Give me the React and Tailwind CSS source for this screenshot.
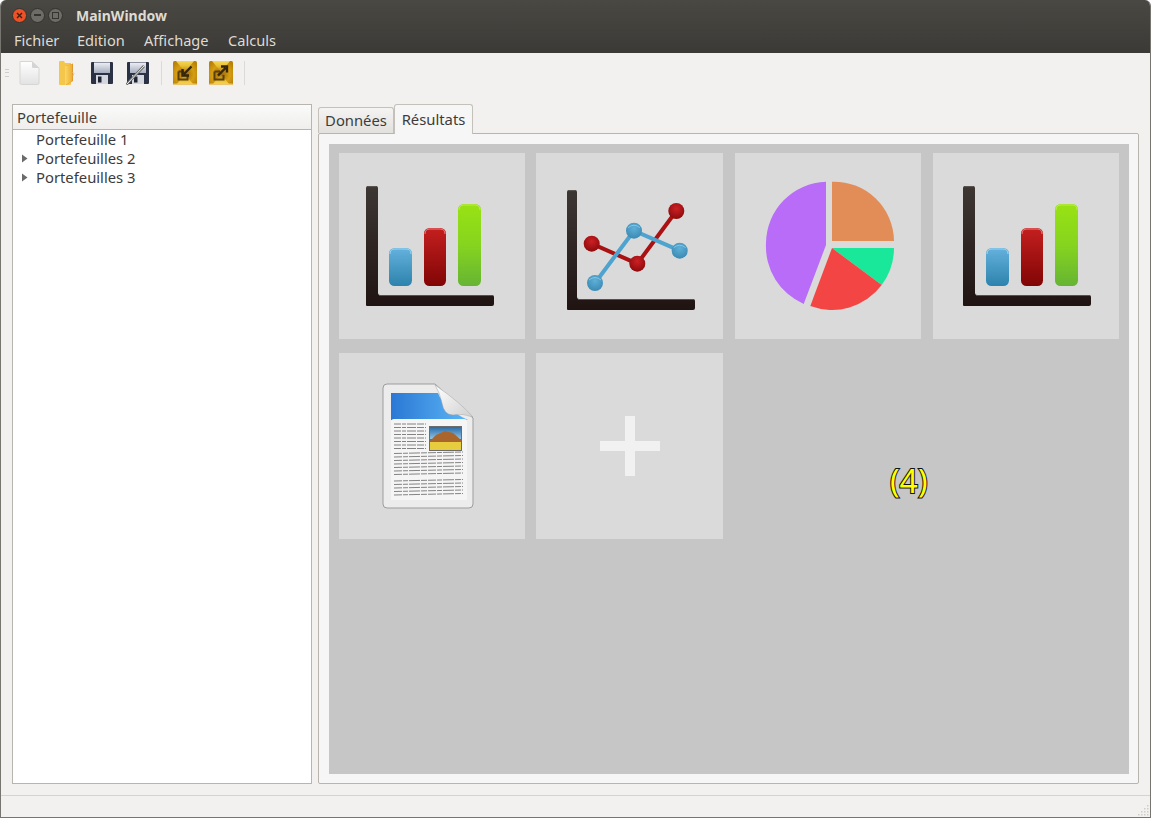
import { useId } from 'react'

const menus = [
  { label: 'Fichier', width: 'w-[63px]' },
  { label: 'Edition', width: 'w-[67px]' },
  { label: 'Affichage', width: 'w-[84px]' },
  { label: 'Calculs', width: 'w-[60px]' },
]

const tree = [
  { label: 'Portefeuille 1', arrow: false },
  { label: 'Portefeuilles 2', arrow: true },
  { label: 'Portefeuilles 3', arrow: true },
]

function WindowButton({ className, children }) {
  return (
    <div className={`w-[15px] h-[15px] rounded-full flex items-center justify-center border border-[#33322e] ${className}`}>
      {children}
    </div>
  )
}

function AxisShape({ x, y, h, w, t, id }) {
  // L shaped axis shared by the two chart icons
  return (
    <>
      <path
        d={`M${x + 2} ${y} H${x + t - 2} Q${x + t} ${y} ${x + t} ${y + 2} V${y + h - 13} Q${x + t} ${y + h - 11} ${x + t + 2} ${y + h - 11} H${x + w - 2} Q${x + w} ${y + h - 11} ${x + w} ${y + h - 9} V${y + h - 2} Q${x + w} ${y + h} ${x + w - 2} ${y + h} H${x + 1} Q${x} ${y + h} ${x} ${y + h - 1} V${y + 2} Q${x} ${y} ${x + 2} ${y} Z`}
        fill={`url(#${id})`}
      />
      <path d={`M${x + 2} ${y + 0.6} H${x + t - 2}`} stroke="#5f5854" strokeWidth="1" fill="none" />
      <path d={`M${x + t + 1} ${y + h - 10.5} H${x + w - 1}`} stroke="#5c4f4a" strokeWidth="1" fill="none" />
    </>
  )
}

function BarChartIcon({ dx = 0 }) {
  const id = useId().replace(/:/g, '')
  const bars = [
    { x: 50, y: 95, w: 23, h: 38, grad: 'b', top: '#9ad6f2' },
    { x: 85, y: 75, w: 22, h: 58, grad: 'r', top: '#ea8080' },
    { x: 119, y: 51, w: 23, h: 82, grad: 'g', top: '#c0ea58' },
  ]
  return (
    <svg viewBox="0 0 186 186" className="w-full h-full">
      <defs>
        <linearGradient id={`${id}a`} x1="0" y1="0" x2="0" y2="1">
          <stop offset="0" stopColor="#3d3733" />
          <stop offset="1" stopColor="#201412" />
        </linearGradient>
        <linearGradient id={`${id}b`} x1="0" y1="0" x2="0" y2="1">
          <stop offset="0" stopColor="#64b1dc" />
          <stop offset="1" stopColor="#2c83ad" />
        </linearGradient>
        <linearGradient id={`${id}r`} x1="0" y1="0" x2="0" y2="1">
          <stop offset="0" stopColor="#c41f1f" />
          <stop offset="1" stopColor="#810505" />
        </linearGradient>
        <linearGradient id={`${id}g`} x1="0" y1="0" x2="0" y2="1">
          <stop offset="0" stopColor="#98e213" />
          <stop offset="0.5" stopColor="#86d41f" />
          <stop offset="1" stopColor="#66b433" />
        </linearGradient>
      </defs>
      <g transform={`translate(${dx} 0)`}>
        <AxisShape x={27} y={33} h={120} w={128} t={12} id={`${id}a`} />
        {bars.map((b) => (
          <g key={b.grad}>
            <rect x={b.x} y={b.y} width={b.w} height={b.h} rx="5.5" fill={`url(#${id}${b.grad})`} />
            <path d={`M${b.x + 1} ${b.y + 6} Q${b.x + 1} ${b.y + 1} ${b.x + 6} ${b.y + 1} H${b.x + b.w - 6} Q${b.x + b.w - 1} ${b.y + 1} ${b.x + b.w - 1} ${b.y + 6}`} stroke={b.top} strokeWidth="1" fill="none" />
          </g>
        ))}
      </g>
    </svg>
  )
}

function LineChartIcon() {
  const id = useId().replace(/:/g, '')
  const red = [[55.7, 90.7], [101.3, 110.7], [140.3, 58]]
  const blue = [[59, 130], [98, 77.7], [143.7, 97.7]]
  const line = (pts) => pts.map((p) => p.join(',')).join(' ')
  return (
    <svg viewBox="0 0 187 186" className="w-full h-full">
      <defs>
        <linearGradient id={`${id}a`} x1="0" y1="0" x2="0" y2="1">
          <stop offset="0" stopColor="#3d3733" />
          <stop offset="1" stopColor="#201412" />
        </linearGradient>
        <radialGradient id={`${id}r`} cx="0.5" cy="0.35" r="0.65">
          <stop offset="0" stopColor="#cc2024" />
          <stop offset="1" stopColor="#8d0a0c" />
        </radialGradient>
        <radialGradient id={`${id}b`} cx="0.5" cy="0.35" r="0.65">
          <stop offset="0" stopColor="#5fb0d8" />
          <stop offset="1" stopColor="#3a8ab4" />
        </radialGradient>
      </defs>
      <AxisShape x={31} y={37} h={120} w={128} t={10} id={`${id}a`} />
      <polyline points={line(red)} fill="none" stroke="#aa1113" strokeWidth="4" />
      <polyline points={line(blue)} fill="none" stroke="#4fa3cf" strokeWidth="4" />
      {red.map(([cx, cy]) => (
        <circle key={cx} cx={cx} cy={cy} r="8" fill={`url(#${id}r)`} />
      ))}
      {blue.map(([cx, cy]) => (
        <g key={cx}>
          <circle cx={cx} cy={cy} r="8" fill={`url(#${id}b)`} />
          <path d={`M${cx - 6} ${cy - 3} Q${cx} ${cy - 8} ${cx + 6} ${cy - 3}`} stroke="#8fcfee" strokeWidth="0.8" fill="none" />
        </g>
      ))}
    </svg>
  )
}

function PieIcon() {
  return (
    <svg viewBox="0 0 186 186" className="w-full h-full">
      <path d="M97 28.7 A60 60 0 0 1 159 88 H97 Z" fill="#e28d57" />
      <path d="M97 95 H159 A62 62 0 0 1 146.7 132 Z" fill="#19e89a" />
      <path d="M97 95 L146.7 132 A62 62 0 0 1 75.3 153 Z" fill="#f44545" />
      <path d="M91 28.7 A62 62 0 0 0 31 90 A63 63 0 0 0 68.7 151 L91 92 Z" fill="#b86cf7" />
    </svg>
  )
}

function DocIcon() {
  const id = useId().replace(/:/g, '')
  const shortLines = [71, 74.5, 78, 81.5, 85, 88.5, 92, 95.5]
  const longLines = [99.5, 103, 106.5, 110, 113.5, 117, 120.5, 127, 130.5, 134, 137.5, 141]
  return (
    <svg viewBox="0 0 186 186" className="w-full h-full">
      <defs>
        <linearGradient id={`${id}b`} x1="0" y1="0" x2="1" y2="0">
          <stop offset="0" stopColor="#2a78d4" />
          <stop offset="1" stopColor="#5cb6f6" />
        </linearGradient>
        <linearGradient id={`${id}f`} x1="0" y1="0" x2="1" y2="1">
          <stop offset="0" stopColor="#ffffff" />
          <stop offset="1" stopColor="#cfcfcf" />
        </linearGradient>
        <linearGradient id={`${id}s`} x1="0" y1="0" x2="0" y2="1">
          <stop offset="0" stopColor="#2a6aa6" />
          <stop offset="1" stopColor="#8fc4e6" />
        </linearGradient>
      </defs>
      <path d="M48 31 H96 L134 65 V151 Q134 155 130 155 H48 Q44 155 44 151 V35 Q44 31 48 31 Z" fill="#ececec" stroke="#9d9d9d" strokeWidth="1" />
      <path d="M52 40 H99 Q105 56 129 67 H52 Z" fill={`url(#${id}b)`} />
      <path d="M96 32 Q122 50 134 64 Q124 60 114 62 Q105 62 103 50 Q101 40 96 32 Z" fill={`url(#${id}f)`} stroke="#a5a5a5" strokeWidth="0.5" />
      <path d="M55 66 H125 Q128 66 128 69 V147 H52 V69 Q52 66 55 66 Z" fill="#f5f5f5" />
      {shortLines.map((y) => (
        <line key={y} x1="55" y1={y} x2="87" y2={y} stroke="#666" strokeWidth="0.8" strokeDasharray="7 1 4 1 9 1" />
      ))}
      {longLines.map((y) => (
        <line key={y} x1="55" y1={y + 1} x2="124" y2={y - 0.5} stroke="#666" strokeWidth="0.8" strokeDasharray="8 1 5 1 11 1 6 1" />
      ))}
      <rect x="90" y="73" width="33" height="25" fill="#6b6b6b" />
      <rect x="91" y="74" width="31" height="12" fill={`url(#${id}s)`} />
      <path d="M91 88 L97 82 L106 78 L114 80 L122 87 V90 H91 Z" fill="#a9652c" />
      <rect x="91" y="89" width="31" height="8" fill="#e6cc3e" />
    </svg>
  )
}

function PlusIcon() {
  return (
    <svg viewBox="0 0 187 186" className="w-full h-full">
      <path d="M89 63 H99 V88 H124 V98 H99 V123 H89 V98 H64 V88 H89 Z" fill="#f1f1f1" />
    </svg>
  )
}

function NewIcon() {
  return (
    <svg width="24" height="26" viewBox="0 0 24 26">
      <defs>
        <linearGradient id="newg" x1="0" y1="0" x2="0" y2="1">
          <stop offset="0" stopColor="#ffffff" />
          <stop offset="1" stopColor="#e2e2e2" />
        </linearGradient>
      </defs>
      <path d="M3 1.5 H15 L22 8 V23 Q22 24.5 20.5 24.5 H4.5 Q3 24.5 3 23 Z" fill="url(#newg)" stroke="#d6d6d4" strokeWidth="1" />
      <path d="M15 1.5 V7 Q15 8 16 8 H22 Z" fill="#d4d4d4" />
    </svg>
  )
}

function FolderIcon() {
  return (
    <svg width="18" height="26" viewBox="0 0 18 26">
      <defs>
        <linearGradient id="foldg" x1="0" y1="0" x2="1" y2="0">
          <stop offset="0" stopColor="#fbd765" />
          <stop offset="1" stopColor="#eeae34" />
        </linearGradient>
      </defs>
      <path d="M1 2 Q1 1 2 1 H6 L7 3 H13 V24 Q13 25 12 25 H2 Q1 25 1 24 Z" fill="#f4c64c" />
      <path d="M8 6 L15 3.5 V21 L8 25 Z" fill="#e0992a" />
      <path d="M7 6.5 L14 4 V21.5 L7 25 Z" fill="url(#foldg)" />
      <path d="M14.5 12 Q17 13 15 16" fill="none" stroke="#d9c89a" strokeWidth="1" />
    </svg>
  )
}

function SaveIcon({ slashed }) {
  return (
    <svg width="24" height="24" viewBox="0 0 24 24">
      <defs>
        <linearGradient id="saveg" x1="0" y1="0" x2="0" y2="1">
          <stop offset="0" stopColor="#eef0f6" />
          <stop offset="1" stopColor="#a5acbd" />
        </linearGradient>
      </defs>
      <path d="M1 2 Q1 1 2 1 H22 Q23 1 23 2 V22 Q23 23 22 23 H2 Q1 23 1 22 Z" fill="#2a3244" />
      <rect x="4" y="1.5" width="16" height="10.5" fill="url(#saveg)" />
      <rect x="6" y="14" width="12" height="9" fill="#d5d7de" />
      <rect x="8" y="15.5" width="3.5" height="6" fill="#1c2333" />
      {slashed && (
        <>
          <path d="M0.5 23.5 L18 5" stroke="#6b6b6b" strokeWidth="2.6" />
          <path d="M1 23 L18 5" stroke="#ececec" strokeWidth="1" />
        </>
      )}
    </svg>
  )
}

function GoldIcon({ out }) {
  const id = useId().replace(/:/g, '')
  return (
    <svg width="24" height="24" viewBox="0 0 24 24">
      <defs>
        <radialGradient id={id} cx="0.5" cy="0.55" r="0.62">
          <stop offset="0" stopColor="#9a6606" />
          <stop offset="0.6" stopColor="#d69e12" />
          <stop offset="1" stopColor="#b98108" />
        </radialGradient>
        <linearGradient id={`${id}t`} x1="0" y1="0" x2="0" y2="1">
          <stop offset="0" stopColor="#fbe05a" stopOpacity="0.95" />
          <stop offset="1" stopColor="#fbe05a" stopOpacity="0" />
        </linearGradient>
        <linearGradient id={`${id}u`} x1="0" y1="1" x2="0" y2="0">
          <stop offset="0" stopColor="#f8d84c" stopOpacity="0.95" />
          <stop offset="1" stopColor="#f8d84c" stopOpacity="0" />
        </linearGradient>
      </defs>
      <rect x="0" y="0" width="24" height="24" rx="1.5" fill={`url(#${id})`} />
      <path d="M3 0 H21 L12 11 Z" fill={`url(#${id}t)`} />
      <path d="M4 23 H20 L12 13 Z" fill={`url(#${id}u)`} />
      <rect x="0" y="22.5" width="24" height="1.5" rx="0.7" fill="#edc56e" />
      <path d="M5.5 10.5 H11 M5.5 10.5 V18.5 H14.5 V14" fill="none" stroke="#5b3f0a" strokeWidth="2" />
      {out ? (
        <path d="M9 14.5 L16.5 7 M12 5.5 H18 V11.5" fill="none" stroke="#35260a" strokeWidth="2.4" />
      ) : (
        <path d="M18.5 5.5 L11 13 M9.5 8 V14.5 H16" fill="none" stroke="#35260a" strokeWidth="2.4" />
      )}
    </svg>
  )
}

function ToolSeparator() {
  return <div className="w-px h-[24px] bg-[#dcdad6]" />
}

function ResizeGrip() {
  const dots = [[9, 1], [9, 4], [6, 4], [9, 7], [6, 7], [3, 7], [9, 10], [6, 10], [3, 10], [0, 10]]
  return (
    <svg width="11" height="12" viewBox="0 0 11 12">
      {dots.map(([x, y]) => (
        <rect key={`${x}-${y}`} x={x} y={y} width="1.5" height="1.5" fill="#d0cdc8" />
      ))}
    </svg>
  )
}

function Tile({ wide, children }) {
  return <div className={`bg-[#dadada] h-[186px] ${wide ? 'w-[187px]' : 'w-[186px]'}`}>{children}</div>
}

export default function App() {
  return (
    <div className="w-[1151px] h-[818px] bg-white overflow-hidden font-['Noto_Sans',sans-serif]">
      <div className="h-full flex flex-col rounded-t-[6px] overflow-hidden border-x border-b border-[#77756f] bg-[#f2f1f0]">
        {/* Title and menu bar */}
        <div className="bg-gradient-to-b from-[#4a4843] to-[#3b3a36] shrink-0">
          <div className="h-[27px] flex items-center pl-[11px] pt-[3px]">
            <div className="flex items-center gap-[3px]">
              <WindowButton className="bg-[#e9532a]">
                <svg width="7" height="7" viewBox="0 0 7 7">
                  <path d="M1 1 L6 6 M6 1 L1 6" stroke="#4a1c0c" strokeWidth="1.4" />
                </svg>
              </WindowButton>
              <WindowButton className="bg-[#6d6c67]">
                <div className="w-[7px] h-[2px] bg-[#35342f]" />
              </WindowButton>
              <WindowButton className="bg-[#6d6c67]">
                <div className="w-[7px] h-[7px] border border-[#35342f]" />
              </WindowButton>
            </div>
            <span className="ml-[13px] text-[14px] font-bold text-[#dfdbd2]">MainWindow</span>
          </div>
          <div className="h-[26px] flex items-center pl-[13px] pt-[2px] text-[14.6px] text-[#dfdbd2]">
            {menus.map((m) => (
              <span key={m.label} className={m.width}>{m.label}</span>
            ))}
          </div>
        </div>

        {/* Toolbar */}
        <div className="h-[39px] flex items-center shrink-0 pl-[4px]">
          <div className="w-[4px] h-[8px] flex flex-col justify-between mr-[8px]">
            <div className="h-px bg-[#d0cec9]" />
            <div className="h-px bg-[#d0cec9]" />
            <div className="h-px bg-[#d0cec9]" />
          </div>
          <div className="w-[24px] mr-[17px]"><NewIcon /></div>
          <div className="w-[18px] mr-[14px]"><FolderIcon /></div>
          <div className="w-[24px] mr-[12px]"><SaveIcon /></div>
          <div className="w-[24px] mr-[11px]"><SaveIcon slashed /></div>
          <ToolSeparator />
          <div className="w-[24px] ml-[11px] mr-[12px]"><GoldIcon /></div>
          <div className="w-[24px] mr-[11px]"><GoldIcon out /></div>
          <ToolSeparator />
        </div>

        {/* Body */}
        <div className="flex-1 min-h-0 flex pl-[11px] pr-[11px] pt-[12px] pb-[11px] gap-[6px]">
          <div className="w-[300px] shrink-0 bg-white border border-[#b8b4ae] flex flex-col">
            <div className="h-[25px] shrink-0 border-b border-[#b8b4ae] bg-gradient-to-b from-[#fafafa] to-[#efeeec] pl-[4px] flex items-center text-[14.8px] text-[#3c3c3c]">
              Portefeuille
            </div>
            <div className="text-[14.8px] text-[#3c3c3c]">
              {tree.map((item) => (
                <div key={item.label} className="h-[19px] flex items-center">
                  <div className="w-[23px] flex justify-end pr-[8px] shrink-0">
                    {item.arrow && (
                      <svg width="7" height="9" viewBox="0 0 7 9">
                        <path d="M1 0.5 L6.5 4.5 L1 8.5 Z" fill="#6b6b6b" />
                      </svg>
                    )}
                  </div>
                  <span>{item.label}</span>
                </div>
              ))}
            </div>
          </div>

          <div className="flex-1 min-w-0 flex flex-col">
            <div className="h-[30px] shrink-0 flex items-end text-[14.8px] text-[#3c3c3c] relative z-10">
              <div className="w-[76px] h-[26px] border border-b-0 border-[#c4c0ba] rounded-t-[3px] bg-gradient-to-b from-[#f5f4f3] to-[#e3e1de] flex items-center justify-center mb-px">
                Données
              </div>
              <div className="w-[79px] h-[30px] border border-b-0 border-[#c4c0ba] rounded-t-[3px] bg-[#f6f6f6] flex items-center justify-center">
                Résultats
              </div>
            </div>
            <div className="flex-1 min-h-0 -mt-px border border-[#b8b4ae] rounded-[2px] bg-[#f6f6f6] pl-[10px] pr-[9px] pt-[10px] pb-[9px]">
              <div className="h-full bg-[#c6c6c6] relative pl-[10px] pr-[10px] pt-[9px]">
                <div className="grid grid-cols-[197px_199px_198px_186px] gap-y-[14px]">
                  <Tile><BarChartIcon /></Tile>
                  <Tile wide><LineChartIcon /></Tile>
                  <Tile><PieIcon /></Tile>
                  <Tile><BarChartIcon dx={3} /></Tile>
                  <Tile><DocIcon /></Tile>
                  <Tile wide><PlusIcon /></Tile>
                </div>
                <span className="absolute left-[561px] top-[315px] text-[32px] leading-[44px] text-[#ffff00] [-webkit-text-stroke:2px_#111] [paint-order:stroke_fill]">
                  (4)
                </span>
              </div>
            </div>
          </div>
        </div>

        {/* Status bar */}
        <div className="h-[22px] shrink-0 border-t border-[#d5d3ce] flex items-end justify-end pr-[1px] pb-[1px]">
          <ResizeGrip />
        </div>
      </div>
    </div>
  )
}
